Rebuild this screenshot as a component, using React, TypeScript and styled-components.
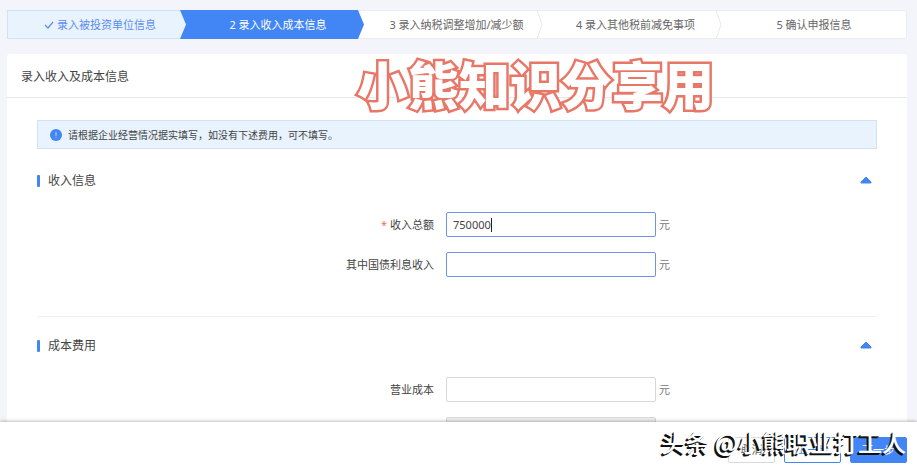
import React, { useState } from "react";
import styled, { createGlobalStyle, css } from "styled-components";

const GlobalStyle = createGlobalStyle`
  * { box-sizing: border-box; }
  html, body, #root { height: 100%; }
  body {
    margin: 0;
    background: #f4f5fa;
    color: #444;
    font: 11px/16px "Noto Sans", "Noto Sans CJK SC", sans-serif;
    overflow: hidden;
  }
  button, input { font: inherit; }
`;

const Page = styled.div`
  position: relative;
  height: 100vh;
  display: flex;
  flex-direction: column;
`;

const Scroll = styled.main`
  flex: 1;
  min-height: 0;
  overflow: hidden;
  padding: 10px 10px 0 7px;
`;

const Steps = styled.ol`
  list-style: none;
  margin: 0;
  padding: 0;
  height: 29px;
  display: grid;
  grid-template-columns: 172fr 178fr 179fr 179fr 190fr;
  background: #fff;
  border: 1px solid #ebedf2;
  border-radius: 3px;
`;

type StepState = "done" | "current" | "todo";

const Step = styled.li<{ $state: StepState }>`
  position: relative;
  display: flex;
  align-items: center;
  justify-content: center;
  gap: 3px;
  margin: -1px 0;
  padding-left: 18px;
  color: #666;
  &:last-child { padding-left: 6px; }
  ${({ $state }) =>
    $state === "done" &&
    css`
      padding-left: 12px;
      color: #5b8def;
      background: #e8f3fe;
      border: 1px solid #cfe3f7;
      border-right: 0;
      margin-left: -1px;
    `}
  ${({ $state }) =>
    $state === "current" &&
    css`
      color: #fff;
      background: #4285f4;
    `}
`;

const Arrow = styled.svg`
  position: absolute;
  z-index: 1;
  top: 0;
  left: 100%;
  width: 6px;
  height: 100%;
`;

const DoneArrow = styled(Arrow)`
  top: -1px;
  height: 29px;
`;

const Panel = styled.section`
  margin-top: 15px;
  background: #fff;
  border-radius: 3px;
`;

const PanelTitle = styled.h1`
  margin: 0;
  padding: 15px 14px 12px;
  font-size: 12px;
  line-height: 16px;
  font-weight: 400;
  border-bottom: 1px solid #e6e8ec;
`;

const PanelBody = styled.div`
  padding: 22px 30px 0;
`;

const Notice = styled.p`
  display: flex;
  align-items: center;
  gap: 6px;
  margin: 0 0 3px;
  height: 29px;
  padding: 0 12px;
  font-size: 10px;
  background: #e8f3fe;
  border: 1px solid #cfe3f3;
`;

const Group = styled.section`
  padding: 17px 0 39px;
  border-bottom: 1px solid #eeeff1;
`;

const GroupHeader = styled.header`
  display: flex;
  align-items: center;
  height: 24px;
  padding-right: 5px;
`;

const GroupTitle = styled.h2`
  display: flex;
  align-items: center;
  gap: 8px;
  flex: 1;
  margin: 0;
  font-size: 12px;
  font-weight: 400;
  &::before {
    content: "";
    width: 3px;
    height: 12px;
    border-radius: 1px;
    background: #4285f4;
  }
`;

const Toggle = styled.button`
  display: flex;
  padding: 0;
  border: 0;
  background: none;
  cursor: pointer;
`;

const Fields = styled.div`
  display: grid;
  gap: 15px;
  padding-top: 19px;
`;

const Field = styled.div`
  display: grid;
  grid-template-columns: 409fr 210fr 221fr;
  align-items: center;
`;

const Label = styled.label`
  padding-right: 12px;
  text-align: right;
`;

const Required = styled.span`
  color: #f0714f;
  margin-right: 3px;
`;

const InputBox = styled.div`
  position: relative;
  display: flex;
`;

const Input = styled.input<{ $active?: boolean }>`
  width: 100%;
  height: 25px;
  padding: 0 6px;
  color: #444;
  background: #fff;
  border: 1px solid ${({ $active }) => ($active ? "#6c94ea" : "#d9d9d9")};
  border-radius: 2px;
  outline: 0;
  caret-color: transparent;
  &:disabled { background: #eee; }
`;

const Caret = styled.span`
  position: absolute;
  top: 6px;
  left: 7px;
  height: 14px;
  display: none;
  pointer-events: none;
  visibility: hidden;
  white-space: pre;
  &::after {
    content: "";
    display: inline-block;
    visibility: visible;
    width: 1px;
    height: 14px;
    background: #222;
  }
  input:focus + & { display: flex; }
`;

const Unit = styled.span`
  padding-left: 3px;
  color: #777;
`;

const Footer = styled.footer`
  position: relative;
  z-index: 2;
  display: flex;
  justify-content: flex-end;
  align-items: center;
  gap: 9px;
  height: 47px;
  padding: 8px 10px 0 0;
  background: #fff;
  box-shadow: 0 -1px 3px rgba(0, 0, 0, 0.25);
`;

const Button = styled.button<{ $kind: "plain" | "outline" | "primary" }>`
  height: 26px;
  min-width: ${({ $kind }) => ($kind === "plain" ? 47 : 57)}px;
  padding: 0 8px;
  border-radius: 2px;
  border: 1px solid ${({ $kind }) => ($kind === "plain" ? "#d9d9d9" : "#4285f4")};
  color: ${({ $kind }) => ({ plain: "#666", outline: "#4285f4", primary: "#fff" })[$kind]};
  background: ${({ $kind }) => ($kind === "primary" ? "#4285f4" : "#fff")};
`;

const Watermark = styled.div`
  position: absolute;
  z-index: 3;
  pointer-events: none;
  white-space: nowrap;
  font-family: "Noto Sans CJK SC", sans-serif;
`;

const TitleMark = styled(Watermark)`
  top: 48px;
  left: 357px;
  font-size: 51px;
  line-height: 70px;
  font-weight: 900;
  color: #fff;
  -webkit-text-stroke: 5px #e87768;
  paint-order: stroke fill;
`;

const AuthorMark = styled(Watermark)`
  right: 11px;
  bottom: 9px;
  font-size: 24px;
  line-height: 36px;
  font-weight: 500;
  color: #fff;
  text-shadow: -1px 1px 0 #111, -2px 2px 0 #111;
`;

const steps: { label: string; state: StepState }[] = [
  { label: "录入被投资单位信息", state: "done" },
  { label: "2 录入收入成本信息", state: "current" },
  { label: "3 录入纳税调整增加/减少额", state: "todo" },
  { label: "4 录入其他税前减免事项", state: "todo" },
  { label: "5 确认申报信息", state: "todo" },
];

function StepArrow({ state }: { state: StepState }) {
  if (state === "done") {
    return (
      <DoneArrow viewBox="0 0 6 29" preserveAspectRatio="none" aria-hidden>
        <path d="M0 0L6 14.5L0 29Z" fill="#e8f3fe" />
      </DoneArrow>
    );
  }
  return (
    <Arrow viewBox="0 0 6 29" preserveAspectRatio="none" aria-hidden>
      {state === "current" ? (
        <path d="M0 0L6 14.5L0 29Z" fill="#4285f4" />
      ) : (
        <path d="M0 0L5 14.5L0 29" fill="none" stroke="#e6e8ec" />
      )}
    </Arrow>
  );
}

interface FieldProps {
  id: string;
  label: string;
  initial?: string;
  required?: boolean;
  active?: boolean;
  disabled?: boolean;
  focus?: boolean;
}

function MoneyField({ id, label, initial = "", required, active, disabled, focus }: FieldProps) {
  const [value, setValue] = useState(initial);
  return (
    <Field>
      <Label htmlFor={id}>
        {required && <Required>*</Required>}
        {label}
      </Label>
      <InputBox>
        <Input
          id={id}
          value={value}
          $active={active}
          disabled={disabled}
          autoFocus={focus}
          onChange={(e) => setValue(e.target.value)}
        />
        <Caret aria-hidden>{value}</Caret>
      </InputBox>
      <Unit>元</Unit>
    </Field>
  );
}

function FormGroup({ title, children }: { title: string; children: React.ReactNode }) {
  const [open, setOpen] = useState(true);
  return (
    <Group>
      <GroupHeader>
        <GroupTitle>{title}</GroupTitle>
        <Toggle type="button" aria-label={title} aria-expanded={open} onClick={() => setOpen(!open)}>
          <svg width="12" height="10" viewBox="0 0 12 10" aria-hidden>
            <path d="M6 1L11 6V7H1V6Z" fill="#4285f4" stroke="#4285f4" strokeLinejoin="round" />
          </svg>
        </Toggle>
      </GroupHeader>
      {open && <Fields>{children}</Fields>}
    </Group>
  );
}

export default function App() {
  return (
    <Page>
      <GlobalStyle />
      <Scroll>
        <Steps>
          {steps.map((s, i) => (
            <Step key={s.label} $state={s.state}>
              {s.state === "done" && (
                <svg width="10" height="8" viewBox="0 0 10 8" aria-hidden>
                  <path d="M1 4L4 7L9 1" fill="none" stroke="#5b8def" strokeWidth="1.2" />
                </svg>
              )}
              {s.label}
              {i < steps.length - 1 && <StepArrow state={s.state} />}
            </Step>
          ))}
        </Steps>
        <Panel>
          <PanelTitle>录入收入及成本信息</PanelTitle>
          <PanelBody>
            <Notice>
              <svg width="12" height="12" viewBox="0 0 12 12" aria-hidden>
                <circle cx="6" cy="6" r="6" fill="#4285f4" />
                <path d="M6 3V7M6 8V9" stroke="#b9d3fb" />
              </svg>
              请根据企业经营情况据实填写，如没有下述费用，可不填写。
            </Notice>
            <FormGroup title="收入信息">
              <MoneyField id="income" label="收入总额" initial="750000" required active focus />
              <MoneyField id="bond" label="其中国债利息收入" active />
            </FormGroup>
            <FormGroup title="成本费用">
              <MoneyField id="cost" label="营业成本" />
              <MoneyField id="tax" label="税金及附加" disabled />
            </FormGroup>
          </PanelBody>
        </Panel>
      </Scroll>
      <Footer>
        <Button type="button" $kind="plain">取消</Button>
        <Button type="button" $kind="outline">上一步</Button>
        <Button type="button" $kind="primary">下一步</Button>
      </Footer>
      <TitleMark>小熊知识分享用</TitleMark>
      <AuthorMark>头条 @小熊职业打工人</AuthorMark>
    </Page>
  );
}
